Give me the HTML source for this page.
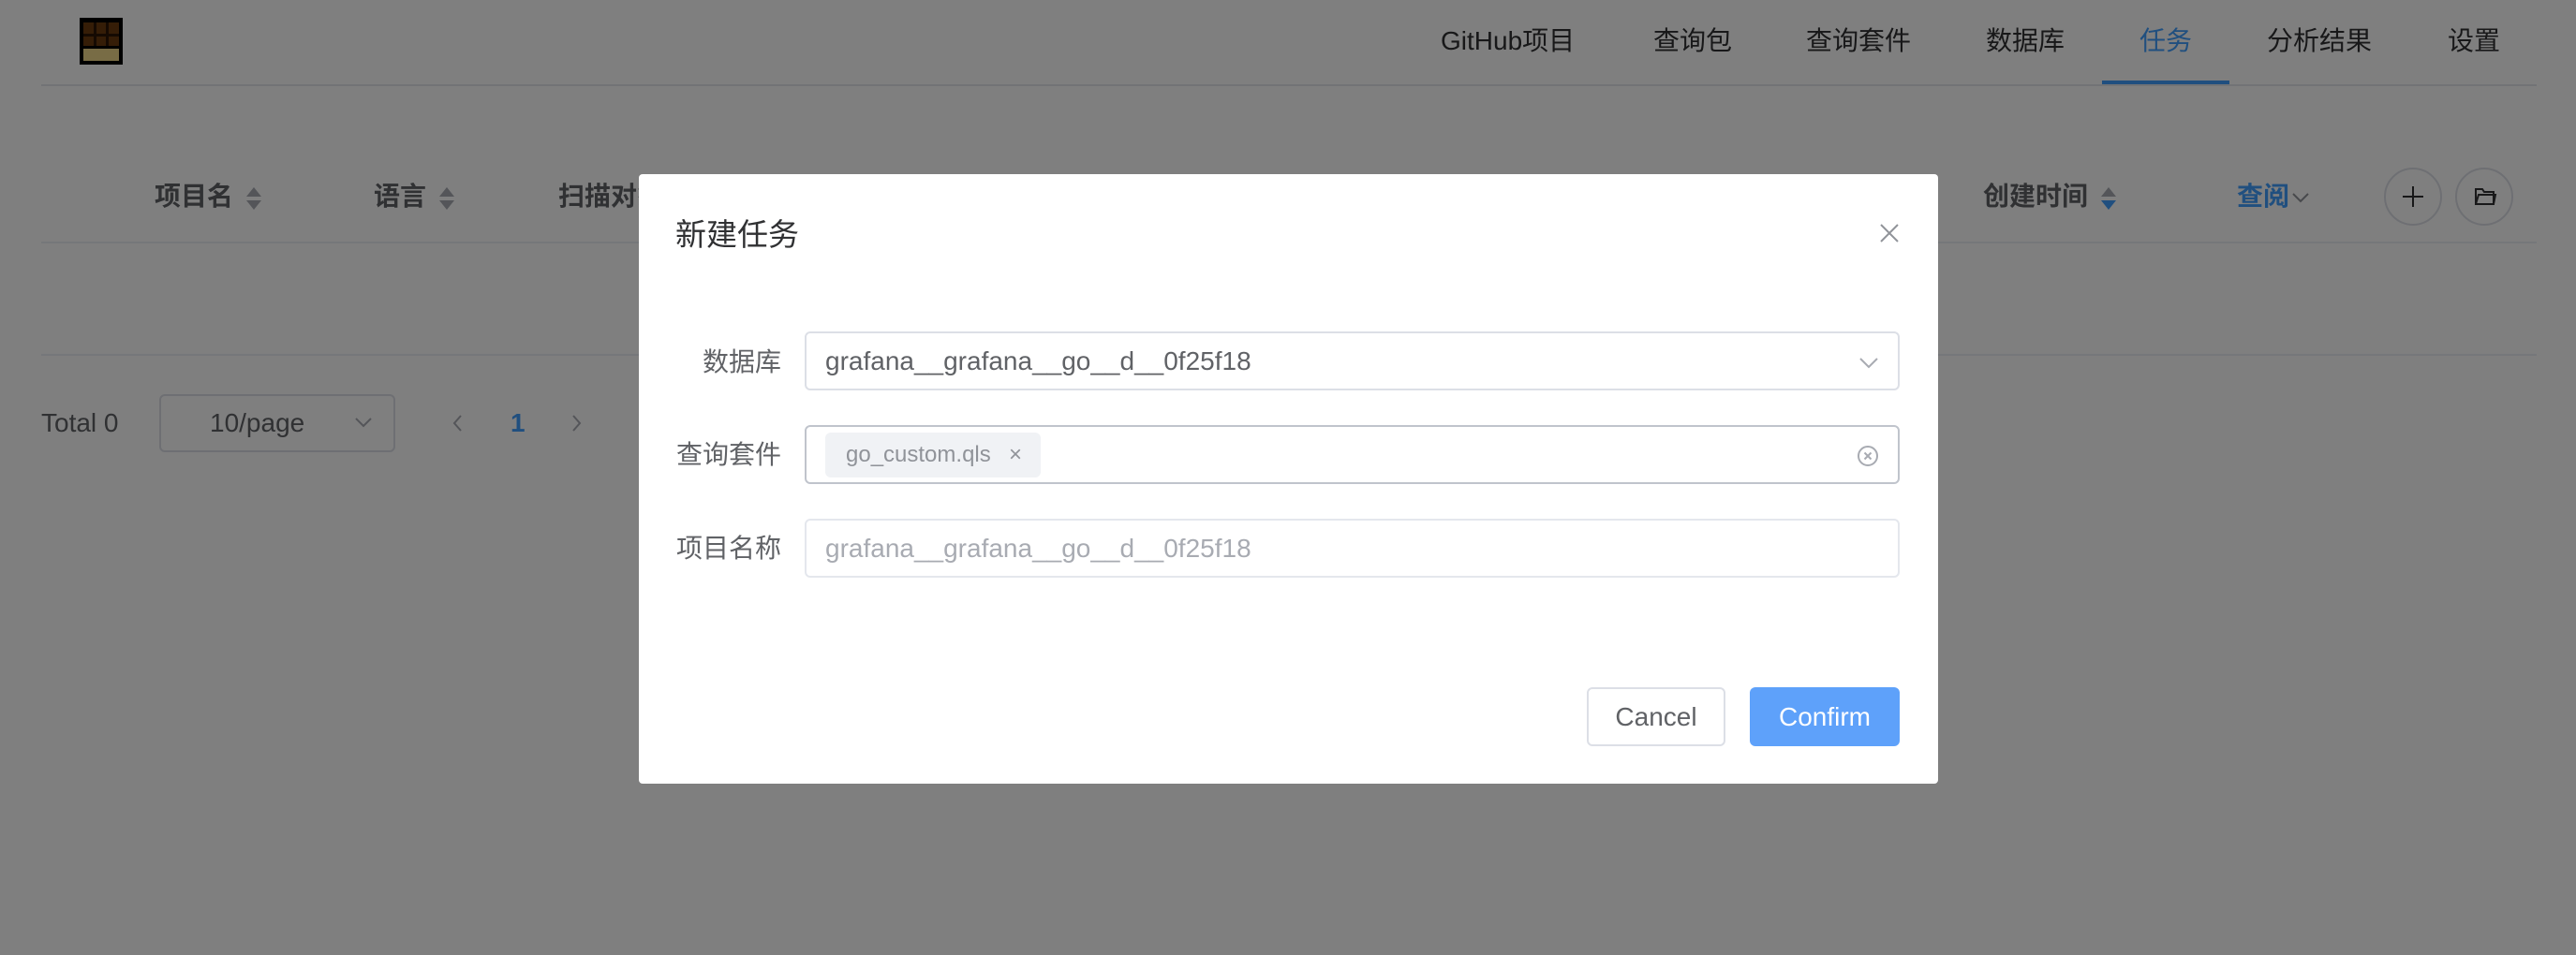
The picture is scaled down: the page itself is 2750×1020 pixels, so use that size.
<!DOCTYPE html>
<html><head><meta charset="utf-8"><style>
*{box-sizing:border-box;margin:0;padding:0}
body{width:2750px;height:1020px;overflow:hidden;background:#fff;font-family:"Liberation Sans","Noto Sans CJK SC",sans-serif;color:#303133;position:relative}
.a{position:absolute;white-space:nowrap}
.nav{top:27px;font-size:28px;line-height:34px;color:#303133}
.th{top:193px;font-size:28px;font-weight:bold;color:#606266;line-height:34px}
.sort{display:inline-block;width:20px;vertical-align:middle;margin-left:12px}
.overlay{position:absolute;left:0;top:0;width:2750px;height:1020px;background:rgba(0,0,0,.5)}
.modal{position:absolute;left:682px;top:186px;width:1387px;height:651px;background:#fff;border-radius:4px}
.lbl{font-size:28px;color:#606266;line-height:34px}
.inp{position:absolute;left:177px;width:1169px;height:63px;border:2px solid #dcdfe6;border-radius:6px;font-size:28px;line-height:59px;padding-left:20px}
</style></head><body>
<!-- logo -->
<div class="a" style="left:85px;top:19px;width:46px;height:50px;background:#000"></div>
<div class="a" style="left:89px;top:24px;width:38px;height:25px;background:#6b3a0e"></div>
<div class="a" style="left:100px;top:24px;width:3px;height:25px;background:#2a1404"></div>
<div class="a" style="left:113px;top:24px;width:3px;height:25px;background:#2a1404"></div>
<div class="a" style="left:89px;top:36px;width:38px;height:3px;background:#2a1404"></div>
<div class="a" style="left:89px;top:52px;width:38px;height:13px;background:#f0d88a"></div>

<div class="a nav" style="left:1538px">GitHub项目</div>
<div class="a nav" style="left:1765px">查询包</div>
<div class="a nav" style="left:1928px">查询套件</div>
<div class="a nav" style="left:2120px">数据库</div>
<div class="a nav" style="left:2284px;color:#409eff">任务</div>
<div class="a nav" style="left:2420px">分析结果</div>
<div class="a nav" style="left:2613px">设置</div>
<div class="a" style="left:2244px;top:86px;width:136px;height:4px;background:#409eff"></div>
<div class="a" style="left:44px;top:90px;width:2664px;height:2px;background:#e4e7ed"></div>

<div class="a th" style="left:165px">项目名<svg class="sort" viewBox="0 0 20 28" height="28"><path d="M10 2L18 12H2Z" fill="#a8abb2"/><path d="M10 26L18 16H2Z" fill="#a8abb2"/></svg></div>
<div class="a th" style="left:399px">语言<svg class="sort" viewBox="0 0 20 28" height="28"><path d="M10 2L18 12H2Z" fill="#a8abb2"/><path d="M10 26L18 16H2Z" fill="#a8abb2"/></svg></div>
<div class="a th" style="left:596px">扫描对象</div>
<div class="a th" style="left:2117px">创建时间<svg class="sort" viewBox="0 0 20 28" height="28"><path d="M10 2L18 12H2Z" fill="#a8abb2"/><path d="M10 26L18 16H2Z" fill="#409eff"/></svg></div>
<div class="a th" style="left:2388px;color:#409eff">查阅</div>
<svg class="a" style="left:2446px;top:204px" width="20" height="14" viewBox="0 0 20 14"><path d="M2 3L10 11L18 3" fill="none" stroke="#909399" stroke-width="2"/></svg>
<div class="a" style="left:2545px;top:179px;width:62px;height:62px;border:2px solid #dcdfe6;border-radius:50%"></div>
<svg class="a" style="left:2562px;top:196px" width="28" height="28" viewBox="0 0 28 28"><path d="M14 3V25M3 14H25" stroke="#303133" stroke-width="2"/></svg>
<div class="a" style="left:2621px;top:179px;width:62px;height:62px;border:2px solid #dcdfe6;border-radius:50%"></div>
<svg class="a" style="left:2640px;top:197px" width="26" height="26" viewBox="0 0 26 26"><path d="M3 5H10L12 8H22V21H3Z M3 21L6 11H24L22 21" fill="none" stroke="#303133" stroke-width="2"/></svg>
<div class="a" style="left:44px;top:258px;width:2664px;height:2px;background:#ebeef5"></div>
<div class="a" style="left:44px;top:378px;width:2664px;height:2px;background:#ebeef5"></div>

<div class="a" style="left:44px;top:435px;font-size:28px;line-height:34px;color:#606266">Total 0</div>
<div class="a" style="left:170px;top:421px;width:252px;height:62px;border:2px solid #dcdfe6;border-radius:6px"></div>
<div class="a" style="left:224px;top:435px;font-size:28px;line-height:34px;color:#606266">10/page</div>
<svg class="a" style="left:378px;top:444px" width="20" height="14" viewBox="0 0 20 14"><path d="M2 3L10 11L18 3" fill="none" stroke="#a8abb2" stroke-width="2"/></svg>
<svg class="a" style="left:482px;top:442px" width="12" height="20" viewBox="0 0 12 20"><path d="M10 2L3 10L10 18" fill="none" stroke="#a8abb2" stroke-width="2"/></svg>
<div class="a" style="left:545px;top:435px;font-size:28px;line-height:34px;color:#409eff;font-weight:bold">1</div>
<svg class="a" style="left:610px;top:442px" width="12" height="20" viewBox="0 0 12 20"><path d="M2 2L9 10L2 18" fill="none" stroke="#a8abb2" stroke-width="2"/></svg>

<div class="overlay"></div>

<div class="modal">
  <div class="a" style="left:39px;top:45px;font-size:33px;line-height:40px;color:#303133">新建任务</div>
  <svg class="a" style="left:1323px;top:51px" width="24" height="24" viewBox="0 0 24 24"><path d="M3 3L21 21M21 3L3 21" stroke="#909399" stroke-width="2"/></svg>

  <div class="a lbl" style="left:68px;top:184px">数据库</div>
  <div class="inp" style="top:168px;color:#606266">grafana__grafana__go__d__0f25f18</div>
  <svg class="a" style="left:1302px;top:194px" width="22" height="14" viewBox="0 0 22 14"><path d="M2 3L11 12L20 3" fill="none" stroke="#a8abb2" stroke-width="2"/></svg>

  <div class="a lbl" style="left:40px;top:283px">查询套件</div>
  <div class="inp" style="top:268px;border-color:#c0c4cc"></div>
  <div class="a" style="left:199px;top:276px;width:230px;height:48px;background:#f0f2f5;border-radius:6px;font-size:24px;line-height:48px;color:#909399;padding-left:22px">go_custom.qls<span style="position:absolute;left:196px;top:0;font-size:24px">×</span></div>
  <svg class="a" style="left:1300px;top:289px" width="24" height="24" viewBox="0 0 24 24"><circle cx="12" cy="12" r="10" fill="none" stroke="#a8abb2" stroke-width="2"/><path d="M8.5 8.5L15.5 15.5M15.5 8.5L8.5 15.5" stroke="#a8abb2" stroke-width="2"/></svg>

  <div class="a lbl" style="left:40px;top:383px">项目名称</div>
  <div class="inp" style="top:368px;color:#a8abb2;border-color:#e4e7ed">grafana__grafana__go__d__0f25f18</div>

  <div class="a" style="left:1012px;top:548px;width:148px;height:63px;border:2px solid #dcdfe6;border-radius:6px;font-size:28px;line-height:59px;text-align:center;color:#606266">Cancel</div>
  <div class="a" style="left:1186px;top:548px;width:160px;height:63px;background:#5ea1fa;border-radius:6px;font-size:28px;line-height:63px;text-align:center;color:#fff">Confirm</div>
</div>
</body></html>
